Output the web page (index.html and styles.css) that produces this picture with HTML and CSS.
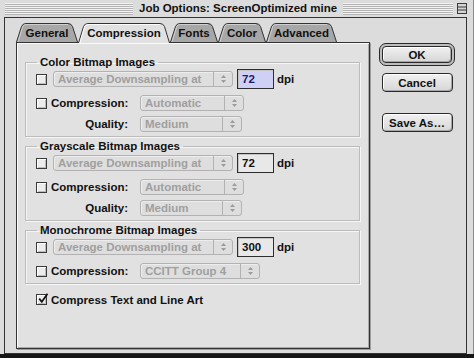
FILE: index.html
```html
<html>

<head>
    <meta charset="UTF-8">
    <link rel="stylesheet" href="styles.css">
</head>

<body>
    <div class="window">
        <div class="titlebar">
            <div class="stripes left"></div>
            <div class="title">Job Options: ScreenOptimized mine</div>
            <div class="stripes"></div>
            <svg class="collapse" width="10" height="11" viewBox="0 0 10 11">
                <rect x="0.5" y="0.5" width="9" height="10" fill="#d4d4d4" stroke="#3a3a3a" />
                <line x1="1" y1="4" x2="9" y2="4" stroke="#3a3a3a" />
                <line x1="1" y1="7" x2="9" y2="7" stroke="#3a3a3a" />
            </svg>
        </div>

        <div class="content">
            <div class="main">
                <div class="tabs">
                    <div class="tab" style="width:62px">
                        <svg width="62" height="19" viewBox="0 0 62 19">
                            <path d="M0.5,19 L5.5,3.5 Q6.7,0.5 10,0.5 H52 Q55.3,0.5 56.5,3.5 L61.5,19" fill="#a7a7a7" stroke="#333" />
                            <path d="M2,19 L6.6,4 Q7.6,1.5 10,1.5 H52" fill="none" stroke="#cfcfcf" />
                        </svg>
                        <span>General</span>
                    </div>
                    <div class="tab on" style="width:92px">
                        <svg width="92" height="20" viewBox="0 0 92 20">
                            <path d="M0.5,20 L5.5,3.5 Q6.7,0.5 10,0.5 H82 Q85.3,0.5 86.5,3.5 L91.5,20" fill="#e1e1e1" stroke="#333" />
                            <path d="M2,20 L6.6,4 Q7.6,1.5 10,1.5 H82" fill="none" stroke="#fbfbfb" />
                        </svg>
                        <span>Compression</span>
                    </div>
                    <div class="tab" style="width:48px">
                        <svg width="48" height="19" viewBox="0 0 48 19">
                            <path d="M0.5,19 L5.5,3.5 Q6.7,0.5 10,0.5 H38 Q41.3,0.5 42.5,3.5 L47.5,19" fill="#a7a7a7" stroke="#333" />
                            <path d="M2,19 L6.6,4 Q7.6,1.5 10,1.5 H38" fill="none" stroke="#cfcfcf" />
                        </svg>
                        <span>Fonts</span>
                    </div>
                    <div class="tab" style="width:48px">
                        <svg width="48" height="19" viewBox="0 0 48 19">
                            <path d="M0.5,19 L5.5,3.5 Q6.7,0.5 10,0.5 H38 Q41.3,0.5 42.5,3.5 L47.5,19" fill="#a7a7a7" stroke="#333" />
                            <path d="M2,19 L6.6,4 Q7.6,1.5 10,1.5 H38" fill="none" stroke="#cfcfcf" />
                        </svg>
                        <span>Color</span>
                    </div>
                    <div class="tab" style="width:71px">
                        <svg width="71" height="19" viewBox="0 0 71 19">
                            <path d="M0.5,19 L5.5,3.5 Q6.7,0.5 10,0.5 H61 Q64.3,0.5 65.5,3.5 L70.5,19" fill="#a7a7a7" stroke="#333" />
                            <path d="M2,19 L6.6,4 Q7.6,1.5 10,1.5 H61" fill="none" stroke="#cfcfcf" />
                        </svg>
                        <span>Advanced</span>
                    </div>
                </div>

                <div class="panel">
                    <fieldset class="group">
                        <legend>Color Bitmap Images</legend>
                        <div class="row r1">
                            <span class="check"></span>
                            <div class="popup w180"><span class="ptext">Average Downsampling at</span><span class="parrow"><svg width="7" height="10" viewBox="0 0 7 10"><path d="M1,4 L3.5,1 L6,4 Z M1,6 L3.5,9 L6,6 Z" fill="#9c9c9c" /></svg></span></div>
                            <div class="field sel">72</div>
                            <span class="unit">dpi</span>
                        </div>
                        <div class="row r2">
                            <span class="check"></span>
                            <span class="col">Compression:</span>
                            <div class="popup w104"><span class="ptext">Automatic</span><span class="parrow"><svg width="7" height="10" viewBox="0 0 7 10"><path d="M1,4 L3.5,1 L6,4 Z M1,6 L3.5,9 L6,6 Z" fill="#9c9c9c" /></svg></span></div>
                        </div>
                        <div class="row r3">
                            <span class="col right">Quality:</span>
                            <div class="popup w102"><span class="ptext">Medium</span><span class="parrow"><svg width="7" height="10" viewBox="0 0 7 10"><path d="M1,4 L3.5,1 L6,4 Z M1,6 L3.5,9 L6,6 Z" fill="#9c9c9c" /></svg></span></div>
                        </div>
                    </fieldset>

                    <fieldset class="group">
                        <legend>Grayscale Bitmap Images</legend>
                        <div class="row r1">
                            <span class="check"></span>
                            <div class="popup w180"><span class="ptext">Average Downsampling at</span><span class="parrow"><svg width="7" height="10" viewBox="0 0 7 10"><path d="M1,4 L3.5,1 L6,4 Z M1,6 L3.5,9 L6,6 Z" fill="#9c9c9c" /></svg></span></div>
                            <div class="field">72</div>
                            <span class="unit">dpi</span>
                        </div>
                        <div class="row r2">
                            <span class="check"></span>
                            <span class="col">Compression:</span>
                            <div class="popup w104"><span class="ptext">Automatic</span><span class="parrow"><svg width="7" height="10" viewBox="0 0 7 10"><path d="M1,4 L3.5,1 L6,4 Z M1,6 L3.5,9 L6,6 Z" fill="#9c9c9c" /></svg></span></div>
                        </div>
                        <div class="row r3">
                            <span class="col right">Quality:</span>
                            <div class="popup w102"><span class="ptext">Medium</span><span class="parrow"><svg width="7" height="10" viewBox="0 0 7 10"><path d="M1,4 L3.5,1 L6,4 Z M1,6 L3.5,9 L6,6 Z" fill="#9c9c9c" /></svg></span></div>
                        </div>
                    </fieldset>

                    <fieldset class="group">
                        <legend>Monochrome Bitmap Images</legend>
                        <div class="row r1">
                            <span class="check"></span>
                            <div class="popup w180"><span class="ptext">Average Downsampling at</span><span class="parrow"><svg width="7" height="10" viewBox="0 0 7 10"><path d="M1,4 L3.5,1 L6,4 Z M1,6 L3.5,9 L6,6 Z" fill="#9c9c9c" /></svg></span></div>
                            <div class="field">300</div>
                            <span class="unit">dpi</span>
                        </div>
                        <div class="row r3">
                            <span class="check"></span>
                            <span class="col">Compression:</span>
                            <div class="popup w120"><span class="ptext">CCITT Group 4</span><span class="parrow"><svg width="7" height="10" viewBox="0 0 7 10"><path d="M1,4 L3.5,1 L6,4 Z M1,6 L3.5,9 L6,6 Z" fill="#9c9c9c" /></svg></span></div>
                        </div>
                    </fieldset>

                    <div class="row last">
                        <span class="check on">
                            <svg width="12" height="12" viewBox="0 0 12 12"><path d="M2.2,5.6 L4.8,8.8 L10.5,0.8" fill="none" stroke="#111" stroke-width="1.7" /></svg>
                        </span>
                        <span class="col wide">Compress Text and Line Art</span>
                    </div>
                </div>
            </div>

            <div class="buttons">
                <div class="ring"><button class="btn">OK</button></div>
                <button class="btn cancel">Cancel</button>
                <button class="btn save">Save As…</button>
            </div>
        </div>
    </div>
</body>

</html>
```

FILE: styles.css
```css
* {
    box-sizing: border-box;
}
html, body {
    height: 358px;
}
body {
    margin: 0;
    background: #161616;
    font-family: 'Liberation Sans', Arial, sans-serif;
    font-size: 11.5px;
    font-weight: bold;
    color: #111;
}
.window {
    width: 474px;
    height: 354px;
    background: #dcdcdc;
    padding: 0 6px 0 4px;
    display: flex;
    flex-direction: column;
    border-right: 1px solid #8c8c8c;
}
.titlebar {
    height: 17px;
    display: flex;
    align-items: center;
    padding-left: 1px;
}
.stripes {
    flex: 1;
    height: 12px;
    background: repeating-linear-gradient(to bottom, #f2f2f2 0 1px, #b4b4b4 1px 2px);
}
.stripes.left {
    flex: none;
    width: 128px;
}
.title {
    padding: 0 6px;
    line-height: 17px;
    white-space: nowrap;
}
.collapse {
    margin-left: 4px;
    flex: none;
}
.content {
    flex: 1;
    border: 1px solid #333;
    display: flex;
}
.main {
    margin-left: 11px;
    padding-top: 5px;
}
.tabs {
    display: flex;
    align-items: flex-start;
    height: 19px;
    position: relative;
    z-index: 1;
}
.tab {
    position: relative;
    height: 19px;
    flex: none;
    display: flex;
    justify-content: center;
    padding-top: 3px;
    line-height: 14px;
}
.tab.on {
    height: 20px;
}
.tab svg {
    position: absolute;
    left: 0;
    top: 0;
}
.tab span {
    position: relative;
}
.panel {
    width: 354px;
    height: 307px;
    border: 1px solid #333;
    background: #e1e1e1;
    padding: 12px 9px 0 8px;
    box-shadow: inset 1px 1px 0 #fafafa, inset -1px -1px 0 #a9a9a9, 1px 1px 0 #9c9c9c;
}
.group {
    width: 335px;
    margin: 0 0 2px;
    padding: 0 0 4px 10px;
    border: 1px solid #bcbcbc;
    min-inline-size: auto;
    box-shadow: 1px 1px 0 #f6f6f6, inset 1px 1px 0 #f6f6f6;
}
.group legend {
    padding: 0 3px;
    margin-left: 1px;
    line-height: 14px;
}
.row {
    display: flex;
    align-items: center;
}
.r1 {
    height: 20px;
    margin-bottom: 6px;
}
.r2 {
    height: 16px;
    margin-bottom: 5px;
}
.r3 {
    height: 16px;
}
.group .r3:first-child, .r2 + .r3 {
    padding-left: 0;
}
.check {
    width: 11px;
    height: 11px;
    flex: none;
    border: 1px solid #3a3a3a;
    background: #ececec;
    box-shadow: inset 1px 1px 0 #fff, inset -1px -1px 0 #bdbdbd;
    position: relative;
}
.check svg {
    position: absolute;
    left: 0;
    top: -2px;
}
.col {
    width: 77px;
    flex: none;
    margin-left: 4px;
    margin-right: 12px;
    white-space: nowrap;
}
.col.right {
    margin-left: 15px;
    text-align: right;
}
.col.wide {
    width: auto;
}
.popup {
    height: 16px;
    display: flex;
    flex: none;
    border: 1px solid #b2b2b2;
    border-radius: 3px;
    background: #dedede;
    color: #a0a0a0;
    line-height: 14px;
    box-shadow: inset 1px 1px 0 #ededed;
}
.r1 .popup {
    margin-left: 6px;
}
.w180 { width: 180px; }
.w104 { width: 104px; }
.w102 { width: 102px; }
.w120 { width: 120px; }
.ptext {
    flex: 1;
    padding-left: 4px;
    white-space: nowrap;
    overflow: hidden;
}
.parrow {
    width: 19px;
    flex: none;
    border-left: 1px solid #b2b2b2;
    display: flex;
    align-items: center;
    justify-content: center;
}
.field {
    width: 37px;
    height: 20px;
    margin-left: 4px;
    border: 1px solid #2e2e2e;
    background: #e8e8e8;
    padding-left: 4px;
    line-height: 18px;
    box-shadow: inset 1px 1px 0 #c4c4c4;
}
.field.sel {
    background: #d0d0f6;
    color: #1c1c66;
}
.unit {
    margin-left: 3px;
}
.last {
    height: 15px;
    margin-top: 8px;
}
.last .check {
    margin-left: 11px;
}
.buttons {
    width: 76px;
    margin-left: 9px;
    padding-top: 25px;
    display: flex;
    flex-direction: column;
    align-items: center;
}
.ring {
    width: 76px;
    height: 23px;
    padding: 2px;
    border: 1px solid #2a2a2a;
    border-radius: 7px;
    background: #bdbdbd;
    display: flex;
}
.btn {
    font: inherit;
    color: #111;
    padding: 0;
    width: 100%;
    height: 100%;
    border: 1px solid #2a2a2a;
    border-radius: 4px;
    background: linear-gradient(#f1f1f1, #d6d6d6);
    box-shadow: inset 1px 1px 0 #fff, inset -1px -1px 0 #a6a6a6;
    line-height: 14px;
}
.cancel, .save {
    width: 71px;
    height: 19px;
    flex: none;
}
.cancel {
    margin-top: 7px;
}
.save {
    margin-top: 21px;
}
```
